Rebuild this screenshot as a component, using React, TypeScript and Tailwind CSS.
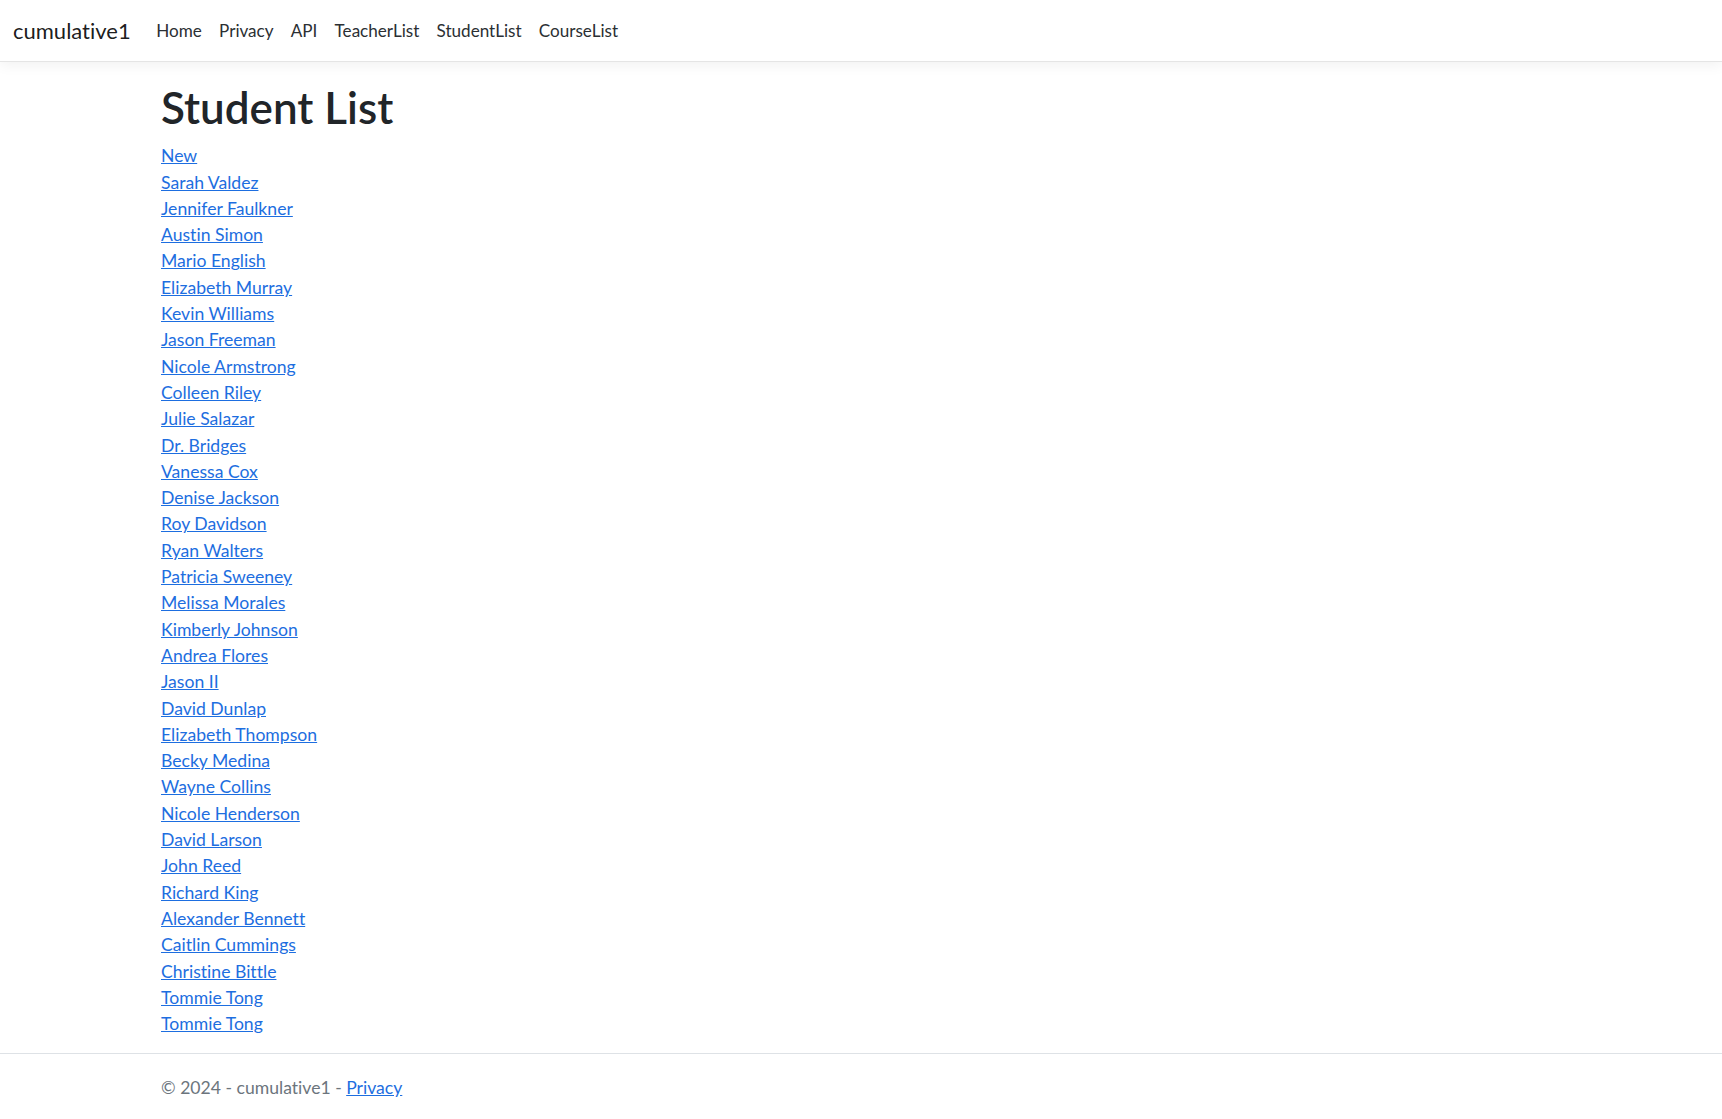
import React from 'react'

const students = [
  'Sarah Valdez',
  'Jennifer Faulkner',
  'Austin Simon',
  'Mario English',
  'Elizabeth Murray',
  'Kevin Williams',
  'Jason Freeman',
  'Nicole Armstrong',
  'Colleen Riley',
  'Julie Salazar',
  'Dr. Bridges',
  'Vanessa Cox',
  'Denise Jackson',
  'Roy Davidson',
  'Ryan Walters',
  'Patricia Sweeney',
  'Melissa Morales',
  'Kimberly Johnson',
  'Andrea Flores',
  'Jason II',
  'David Dunlap',
  'Elizabeth Thompson',
  'Becky Medina',
  'Wayne Collins',
  'Nicole Henderson',
  'David Larson',
  'John Reed',
  'Richard King',
  'Alexander Bennett',
  'Caitlin Cummings',
  'Christine Bittle',
  'Tommie Tong',
  'Tommie Tong',
]

const navItems = ['Home', 'Privacy', 'API', 'TeacherList', 'StudentList', 'CourseList']

const App = () => {
  return (
    <div className="flex flex-col min-h-screen bg-white font-['Lato',sans-serif] [font-variant-ligatures:none] text-[#212529] text-[17.6px] leading-[26.3px]">
      <header className="h-[62px] border-b border-[#e5e5e5] shadow-[0_4px_12px_rgba(0,0,0,0.05)] flex items-center px-[13px] pt-[2px] bg-white">
        <a href="#" className="text-[22px] text-black/90 mr-[17px]">cumulative1</a>
        <nav className="flex items-center text-[17.1px]">
          {navItems.map((item) => (
            <a key={item} href="#" className="px-[8.6px] text-[#2b2f33]">{item}</a>
          ))}
        </nav>
      </header>

      <main className="flex-1 pl-[161px] pt-[19px] pb-[12px]">
        <h1 className="text-[44px] leading-[52.8px] font-semibold mb-[9.5px]">Student List</h1>
        <div className="flex flex-col items-start">
          <a href="#" className="text-[#1d6ee0] underline">New</a>
          {students.map((name, i) => (
            <a key={i} href="#" className="text-[#1d6ee0] underline">{name}</a>
          ))}
        </div>
      </main>

      <footer className="border-t border-[#dee2e6] h-[66px] flex items-center pl-[161px] pt-[3px] text-[#6c757d]">
        <span>© 2024 - cumulative1 - <a href="#" className="text-[#1d6ee0] underline">Privacy</a></span>
      </footer>
    </div>
  )
}

export default App
